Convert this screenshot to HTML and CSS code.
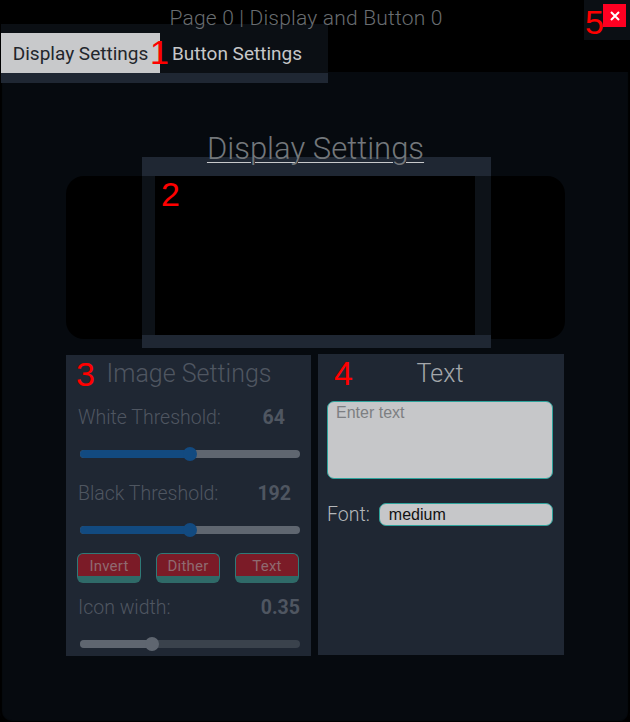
FILE: index.html
```html
<!DOCTYPE html>
<html lang="en">
<head>
<meta charset="utf-8">
<title>Page 0 | Display and Button 0</title>
<link rel="stylesheet" href="styles.css">
</head>
<body>
<div class="window">
  <header class="header">
    <h1 class="page-title">Page 0 | Display and Button 0</h1>
    <div class="tabs-wrap">
      <div class="tabs">
        <button class="tab tab-active">Display Settings</button>
        <button class="tab">Button Settings</button>
      </div>
      <div class="tabs-strip"></div>
      <span class="mark mark-1">1</span>
    </div>
    <div class="close-wrap">
      <button class="close" aria-label="Close">
        <svg width="10" height="10" viewBox="0 0 10 10"><path d="M1 1L9 9M9 1L1 9" stroke="#fff" stroke-width="2"/></svg>
      </button>
      <span class="mark mark-5">5</span>
    </div>
  </header>
  <main class="content">
    <h2 class="section-title"><span class="section-text">Display Settings</span></h2>
    <div class="display-panel">
      <div class="frame">
        <div class="screen"></div>
        <span class="mark mark-2">2</span>
      </div>
    </div>
    <div class="columns">
      <section class="card">
        <h3 class="card-title dim">Image Settings</h3>
        <span class="mark mark-3">3</span>
        <div class="row row-1"><span>White Threshold:</span><b class="val-64">64</b></div>
        <div class="slider"><div class="fill" style="width:50%"></div><div class="thumb" style="left:50%"></div></div>
        <div class="row row-2"><span>Black Threshold:</span><b class="val-192">192</b></div>
        <div class="slider"><div class="fill" style="width:50%"></div><div class="thumb" style="left:50%"></div></div>
        <div class="buttons">
          <button class="btn">Invert</button>
          <button class="btn">Dither</button>
          <button class="btn">Text</button>
        </div>
        <div class="row row-3"><span>Icon width:</span><b>0.35</b></div>
        <div class="slider slider-grey"><div class="fill" style="width:32.5%"></div><div class="thumb" style="left:32.5%"></div></div>
      </section>
      <section class="card card-text">
        <h3 class="card-title">Text</h3>
        <span class="mark mark-4">4</span>
        <textarea class="text-input" placeholder="Enter text"></textarea>
        <div class="font-row">
          <label class="font-label">Font:</label>
          <div class="font-select">medium</div>
        </div>
      </section>
    </div>
  </main>
</div>
</body>
</html>
```
FILE: styles.css
```css
* { box-sizing: border-box; }
html, body { margin: 0; height: 100%; }
body { background: #000; font-family: Roboto, "Liberation Sans", sans-serif; }
.window { width: 630px; height: 722px; overflow: hidden; display: flex; flex-direction: column; background: #060a0f; border-radius: 0 0 10px 10px; box-shadow: inset 2px -1px 1px #000, inset -2px 0 1px #000; }
.header { position: relative; height: 72px; background: #000; flex: none; }
.page-title { margin: 0; height: 24px; padding: 4px 18px 0 0; text-align: center; font-size: 21px; line-height: 28px; font-weight: 300; color: #696d71; position: relative; z-index: 2; letter-spacing: 0.2px; }
.tabs-wrap { position: relative; width: 327px; margin-left: 1px; height: 59px; background: #0b0f14; padding-top: 9px; z-index: 1; }
.tabs { display: flex; height: 40px; }
.tab { border: 0; background: transparent; color: #c6c7c9; font: 400 19px/42px Roboto, sans-serif; padding: 0; height: 40px; width: 154px; }
.tab-active { background: #c8c9cb; color: #22262b; width: 159px; }
.tabs-strip { height: 10px; background: #1f2733; }
.close-wrap { position: absolute; right: 0; top: 0; width: 46px; height: 40px; background: #0b0f14; }
.close { position: absolute; left: 19px; top: 4px; width: 23px; height: 23px; background: #ff0022; border: 0; padding: 0; display: flex; align-items: center; justify-content: center; }
.mark { position: absolute; color: #ff0000; font-family: "Liberation Sans", sans-serif; font-size: 34px; line-height: 34px; z-index: 3; }
.mark-1 { left: 149px; top: 11px; }
.mark-5 { left: 1px; top: 5px; }
.mark-2 { left: 19px; top: 20px; }
.mark-3 { left: 10px; top: 2px; }
.mark-4 { left: 16px; top: 2px; }
.content { flex: 1; padding: 59px 65px 0 66px; }
.section-title { margin: 0; height: 45px; text-align: center; font-size: 31px; line-height: 36px; font-weight: 300; color: #73777b; position: relative; z-index: 2; }
.section-text { text-decoration: underline; text-decoration-color: #c8c9cb; text-decoration-thickness: 1px; text-underline-offset: 3px; }
.display-panel { height: 163px; background: #000; border-radius: 18px; position: relative; }
.frame { position: absolute; left: 76px; top: -19px; width: 349px; height: 191px; background: #0d1218; border-top: 19px solid #1f2733; border-bottom: 13px solid #1f2733; padding: 0 16px 0 13px; }
.frame .mark { margin-top: -19px; }
.screen { height: 100%; background: #000; }
.columns { display: grid; grid-template-columns: 245px 246px; gap: 7px; margin-top: 16px; }
.card { position: relative; height: 301px; background: #1f2733; padding: 0 11px 0 12px; }
.card-title { margin: 0; height: 37px; text-align: center; font-size: 25px; line-height: 38px; font-weight: 300; color: #a4a7ab; }
.card-title.dim { color: #4f5661; }
.row { display: flex; justify-content: space-between; height: 24px; font-size: 19.5px; line-height: 26px; font-weight: 300; color: #4f5661; }
.row b { font-weight: 700; }
.row-1 { margin-top: 13px; padding-right: 15px; }
.row-2 { margin-top: 23px; padding-right: 9px; }
.row-3 { margin-top: 12px; }
.slider { position: relative; height: 8px; background: #5f6670; border-radius: 4px; margin: 21px 0 0 2px; width: 220px; }
.fill { height: 100%; background: #124a80; border-radius: 4px; }
.thumb { position: absolute; top: -3px; width: 14px; height: 14px; margin-left: -7px; border-radius: 50%; background: #124a80; }
.slider-grey { background: #3a424c; }
.slider-grey .fill, .slider-grey .thumb { background: #5f6670; }
.buttons { display: flex; justify-content: space-between; margin: 19px 1px 0 -1px; }
.btn { width: 64px; height: 30px; border: 1px solid #2f7a78; border-bottom: 7px solid #2f6a68; border-radius: 6px; background: #7b1b27; color: #8f6a70; font: 400 15px/20px Roboto, sans-serif; padding: 2px 0 0; letter-spacing: 0.2px; }
.card-text { padding: 0 11px 0 9px; margin-top: -1px; }
.card-text .card-title { line-height: 40px; }
.text-input { display: block; width: 226px; height: 78px; margin-top: 10px; background: #c6c7c9; border: 1px solid #2ea39c; border-radius: 7px; padding: 2px 8px; font: 16px "Liberation Sans", sans-serif; resize: none; outline: 0; }
.text-input::placeholder { color: #7d7f82; opacity: 1; }
.font-row { display: flex; align-items: center; margin-top: 24px; gap: 9px; }
.font-label { font-size: 19.5px; font-weight: 300; color: #b4b7ba; }
.font-select { flex: 1; height: 23px; background: #c6c7c9; border: 1px solid #2ea39c; border-radius: 7px; padding-left: 9px; font: 16px/22px "Liberation Sans", sans-serif; color: #111; }
```
